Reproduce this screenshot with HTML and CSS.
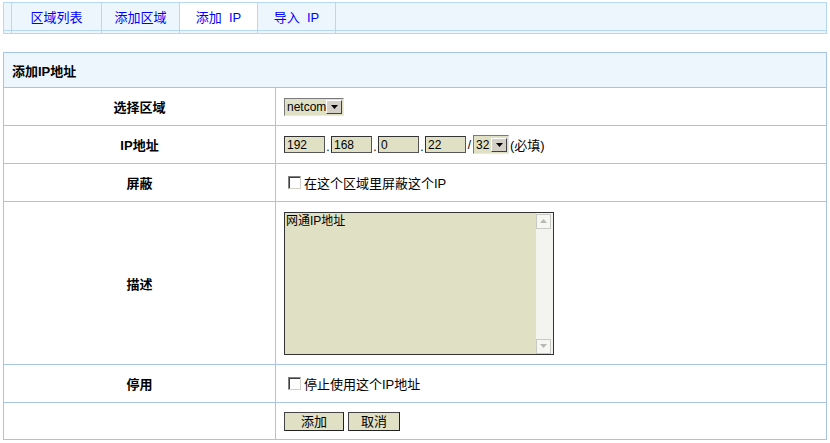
FILE: index.html
```html
<!DOCTYPE html>
<html lang="zh-CN">
<head>
<meta charset="utf-8">
<title>添加IP地址</title>
<link rel="stylesheet" href="styles.css">
</head>
<body>
<div class="tabbar">
  <div class="tab tab-spacer"><div class="tab-label"></div></div>
  <div class="tab tab-wide"><a class="tab-label">区域列表</a></div>
  <div class="tab"><a class="tab-label">添加区域</a></div>
  <div class="tab active"><a class="tab-label">添加&nbsp;&nbsp;IP</a></div>
  <div class="tab"><a class="tab-label">导入&nbsp;&nbsp;IP</a></div>
  <div class="tab tab-fill"><div class="tab-label"></div></div>
</div>

<table class="form">
  <tr class="row-head">
    <td colspan="2" class="head">添加IP地址</td>
  </tr>
  <tr class="row">
    <td class="label">选择区域</td>
    <td class="field">
      <span class="select sel-zone"><span class="sel-text">netcom</span><span class="sel-btn"><svg width="7" height="4" viewBox="0 0 7 4"><path d="M0 0h7L3.5 4z" fill="#000"/></svg></span></span>
    </td>
  </tr>
  <tr class="row">
    <td class="label">IP地址</td>
    <td class="field">
      <div class="ip-line">
        <input class="ip" value="192"><span class="dot">.</span><input class="ip" value="168"><span class="dot">.</span><input class="ip" value="0"><span class="dot">.</span><input class="ip" value="22"><span class="slash">/</span><span class="select sel-mask"><span class="sel-text">32</span><span class="sel-btn"><svg width="7" height="4" viewBox="0 0 7 4"><path d="M0 0h7L3.5 4z" fill="#000"/></svg></span></span><span class="hint">(必填)</span>
      </div>
    </td>
  </tr>
  <tr class="row">
    <td class="label">屏蔽</td>
    <td class="field">
      <label class="check"><input type="checkbox" class="cb"><span>在这个区域里屏蔽这个IP</span></label>
    </td>
  </tr>
  <tr class="row-desc">
    <td class="label">描述</td>
    <td class="field">
      <div class="textarea">
        <div class="ta-text">网通IP地址</div>
        <div class="ta-scroll">
          <span class="ta-btn"><svg width="7" height="4" viewBox="0 0 7 4"><path d="M0 4h7L3.5 0z" fill="#b8b8b4"/></svg></span>
          <span class="ta-btn"><svg width="7" height="4" viewBox="0 0 7 4"><path d="M0 0h7L3.5 4z" fill="#b8b8b4"/></svg></span>
        </div>
      </div>
    </td>
  </tr>
  <tr class="row">
    <td class="label">停用</td>
    <td class="field">
      <label class="check"><input type="checkbox" class="cb"><span>停止使用这个IP地址</span></label>
    </td>
  </tr>
  <tr class="row-last">
    <td class="label"></td>
    <td class="field">
      <div class="buttons">
        <button class="btn btn-add">添加</button><button class="btn btn-cancel">取消</button>
      </div>
    </td>
  </tr>
</table>
</body>
</html>
```
FILE: styles.css
```css
html, body {
  margin: 0;
  padding: 0;
  background: #ffffff;
}
body {
  font-family: "Liberation Sans", "Noto Sans CJK SC", sans-serif;
  font-size: 13px;
  color: #000;
}

/* ---- tabs ---- */
.tabbar {
  display: flex;
  margin: 2px 3px 0;
  border: 1px solid #b6d7f6;
  background: #eef6fd;
}
.tab {
  border-right: 1px solid #b6d7f6;
  padding-bottom: 2px;
  width: 77px;
}
.tab-spacer { width: 7px; }
.tab-wide { width: 89px; }
.tab-fill { flex: 1; border-right: 0; }
.tab-label {
  display: flex;
  align-items: center;
  justify-content: center;
  height: 27px;
  border-bottom: 1px solid #b6d7f6;
  color: #0000ff;
  font-size: 13px;
  text-decoration: none;
  white-space: nowrap;
}
.tab.active .tab-label { background: #ffffff; }

/* ---- form table ---- */
.form {
  margin: 18px 3px 0;
  width: 824px;
  border-collapse: collapse;
  border: 1px solid #a6c4e8;
}
.form td {
  border: 1px solid #a6c4e8;
  padding: 0;
  vertical-align: middle;
}
.head {
  background: #eef6fd;
  font-weight: bold;
  padding-left: 8px !important;
  height: 34px;
}
.row td { height: 37px; }
.row-desc td { height: 162px; }
.row-last td { height: 36px; }
.label {
  width: 271px;
  text-align: center;
  font-weight: bold;
}
.field {
  padding-left: 8px !important;
}

/* ---- select ---- */
.select {
  display: inline-flex;
  align-items: center;
  box-sizing: border-box;
  border: 1px solid;
  border-color: #7a7a7a #e8e8e8 #e8e8e8 #7a7a7a;
  background: #e0e0c4;
  vertical-align: middle;
  font-size: 12px;
}
.sel-zone { width: 60px; height: 18px; }
.sel-mask { width: 36px; height: 19px; }
.sel-text {
  flex: 1;
  padding-left: 2px;
  line-height: 14px;
}
.sel-btn {
  display: flex;
  align-items: center;
  justify-content: center;
  box-sizing: border-box;
  width: 16px;
  height: 14px;
  margin-right: 1px;
  background: #d4d0c8;
  border: 1px solid;
  border-color: #ffffff #404040 #404040 #ffffff;
}

/* ---- ip line ---- */
.ip-line {
  display: flex;
  align-items: center;
}
.ip {
  box-sizing: border-box;
  width: 41px;
  height: 17px;
  margin: 0;
  padding: 0 2px;
  border: 1px solid #333;
  border-color: #333 #555 #555 #333;
  background: #e0e0c4;
  font-family: "Liberation Sans", sans-serif;
  font-size: 12px;
  color: #000;
  outline: none;
}
.dot {
  width: 6px;
  text-align: center;
  font-size: 12px;
  align-self: flex-end;
  line-height: 14px;
}
.slash {
  width: 7px;
  text-align: center;
  font-size: 12px;
}
.hint { margin-left: 1px; font-size: 13px; }

/* ---- checkboxes ---- */
.check {
  display: inline-flex;
  align-items: center;
  gap: 3px;
  margin-left: 4px;
}
.cb {
  appearance: none;
  -webkit-appearance: none;
  box-sizing: border-box;
  width: 13px;
  height: 13px;
  margin: 0;
  background: #fff;
  border: 1px solid;
  border-color: #808080 #d4d0c8 #d4d0c8 #808080;
  box-shadow: inset 1px 1px 0 #404040;
}

/* ---- textarea ---- */
.textarea {
  display: flex;
  box-sizing: border-box;
  width: 270px;
  height: 143px;
  border: 1px solid #333;
  background: #e0e0c4;
}
.ta-text {
  flex: 1;
  padding: 1px 1px;
  font-size: 12px;
  line-height: 14px;
}
.ta-scroll {
  display: flex;
  flex-direction: column;
  justify-content: space-between;
  box-sizing: border-box;
  width: 17px;
  padding: 1px 1px 0 0;
  background: #f3f3ef;
}
.ta-btn {
  display: flex;
  align-items: center;
  justify-content: center;
  box-sizing: border-box;
  width: 15px;
  height: 15px;
  border: 1px solid #c8c8c4;
  background: #f6f6f2;
}

/* ---- buttons ---- */
.buttons { display: flex; gap: 4px; }
.btn {
  box-sizing: border-box;
  height: 19px;
  margin: 0;
  padding: 0;
  border: 1px solid #333;
  border-color: #444 #222 #222 #444;
  background: #e0e0c4;
  font-family: "Liberation Sans", "Noto Sans CJK SC", sans-serif;
  font-size: 13px;
  line-height: 15px;
  color: #000;
}
.btn-add { width: 60px; }
.btn-cancel { width: 52px; }
```
